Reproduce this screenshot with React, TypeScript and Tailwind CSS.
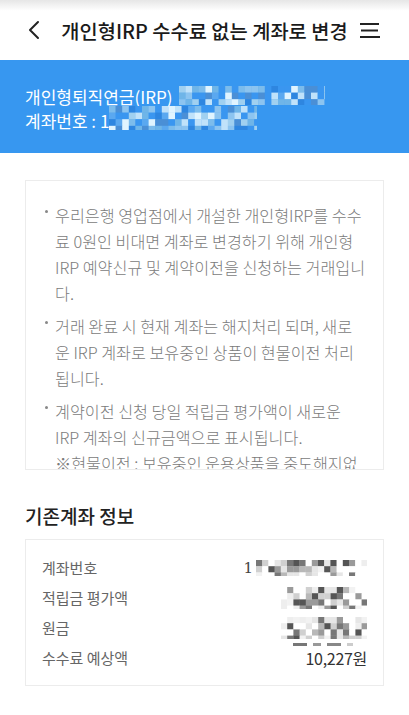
import React from "react";

function rng(seed: number) {
  let s = seed;
  return () => {
    s = (s * 1103515245 + 12345) % 2147483648;
    return s / 2147483648;
  };
}

function Mosaic({
  w,
  h,
  cell,
  palette,
  seed,
  className,
}: {
  w: number;
  h: number;
  cell: number;
  palette: string[];
  seed: number;
  className?: string;
}) {
  const r = rng(seed);
  const cols = Math.ceil(w / cell);
  const rows = Math.ceil(h / cell);
  const rects: React.ReactNode[] = [];
  for (let y = 0; y < rows; y++) {
    for (let x = 0; x < cols; x++) {
      const c = palette[Math.floor(r() * palette.length)];
      rects.push(
        <rect key={`${x}-${y}`} x={x * cell} y={y * cell} width={cell + 0.3} height={cell + 0.3} fill={c} />
      );
    }
  }
  return (
    <svg width={w} height={h} viewBox={`0 0 ${w} ${h}`} className={className}>
      {rects}
    </svg>
  );
}

const bluePal = ["#3a96f0", "#5aa8f0", "#8cc4f0", "#c0e2fa", "#2e86e0", "#6fb5e8", "#a0d0f0", "#e0f4ff", "#4a8fd6", "#3a96f0", "#7cbcec"];
const grayPal = ["#ffffff", "#ffffff", "#f2f2f2", "#e6e6e6", "#d0d0d0", "#b8b8b8", "#9a9a9a", "#777777", "#555555", "#ffffff", "#eeeeee"];

const bullets: string[][] = [
  [
    "우리은행 영업점에서 개설한 개인형IRP를 수수",
    "료 0원인 비대면 계좌로 변경하기 위해 개인형",
    "IRP 예약신규 및 계약이전을 신청하는 거래입니",
    "다.",
  ],
  [
    "거래 완료 시 현재 계좌는 해지처리 되며, 새로",
    "운 IRP 계좌로 보유중인 상품이 현물이전 처리",
    "됩니다.",
  ],
  [
    "계약이전 신청 당일 적립금 평가액이 새로운",
    "IRP 계좌의 신규금액으로 표시됩니다.",
    "※현물이전 : 보유중인 운용상품을 중도해지없",
  ],
];

export default function App() {
  return (
    <div
      className="w-[409px] h-[715px] bg-white overflow-hidden"
      style={{ fontFamily: '"Noto Sans CJK KR", "Noto Sans", sans-serif' }}
    >
      {/* Header */}
      <div className="h-[60px] bg-gradient-to-b from-[#e6e6e6] via-white via-[18%] to-white flex items-center px-[27px] relative">
        <svg width="16" height="20" viewBox="0 0 16 20" className="shrink-0">
          <path d="M11 2 L3 10 L11 18" fill="none" stroke="#222" strokeWidth="2" strokeLinecap="round" strokeLinejoin="round" />
        </svg>
        <div className="flex-1 pl-[8px] text-center text-[19.8px] font-medium text-[#1a1a1a] leading-none pt-[1px] whitespace-nowrap">
          개인형IRP 수수료 없는 계좌로 변경
        </div>
        <svg width="24" height="20" viewBox="0 0 24 20" className="shrink-0">
          <path d="M2 4 H21" stroke="#222" strokeWidth="2" />
          <path d="M3 10.5 H20" stroke="#222" strokeWidth="2" />
          <path d="M2 17 H22" stroke="#222" strokeWidth="2" />
        </svg>
      </div>

      {/* Blue banner */}
      <div className="h-[93px] bg-[#3797f0] pt-[25px] px-[25px] text-white text-[17px] leading-[24px]">
        <div className="flex items-center whitespace-nowrap">
          <span>개인형퇴직연금(IRP)</span>
          <Mosaic w={146} h={19} cell={6.6} palette={bluePal} seed={7} className="ml-[6px] -mt-[4px]" />
        </div>
        <div className="flex items-center whitespace-nowrap">
          <span>계좌번호 : 1</span>
          <Mosaic w={148} h={24} cell={6.6} palette={bluePal} seed={31} className="-mt-[6px]" />
        </div>
      </div>

      {/* Notice box */}
      <div className="mx-[25px] mt-[27px] h-[290px] overflow-hidden border border-[#ececec] pt-[21px] pl-[19px] pr-[8px]">
        {bullets.map((lines, i) => (
          <div key={i} className={`flex ${i > 0 ? "mt-[7px]" : ""}`}>
            <div className="w-[10px] shrink-0 relative">
              <span className="absolute left-0 top-[8px] w-[3px] h-[3px] rounded-full bg-[#888]" />
            </div>
            <div className="text-[16.2px] leading-[26px] text-[#7b7b7b] font-light">
              {lines.map((l, j) => (
                <div key={j} className="whitespace-nowrap">
                  {l}
                </div>
              ))}
            </div>
          </div>
        ))}
      </div>

      {/* Section title */}
      <div className="mt-[33px] px-[25px] text-[19px] leading-[26px] font-medium text-[#222]">기존계좌 정보</div>

      {/* Info box */}
      <div className="mx-[25px] mt-[10px] border border-[#ececec] pt-[13px] pb-[12px] px-[16px] text-[15px] text-[#666]">
        <div className="h-[30px] flex items-center justify-between">
          <span>계좌번호</span>
          <span className="flex items-center text-[#444]">
            <span className="mr-[3px] text-[15px]" style={{ fontFamily: '"DejaVu Serif", serif' }}>1</span>
            <Mosaic w={111} h={16} cell={6.2} palette={grayPal} seed={11} />
          </span>
        </div>
        <div className="h-[30px] flex items-center justify-between">
          <span>적립금 평가액</span>
          <Mosaic w={86} h={22} cell={6.2} palette={grayPal} seed={23} />
        </div>
        <div className="h-[30px] flex items-center justify-between">
          <span>원금</span>
          <Mosaic w={86} h={22} cell={6.2} palette={grayPal} seed={41} />
        </div>
        <div className="h-[30px] flex items-center justify-between relative">
          <span>수수료 예상액</span>
          <span className="text-[16px] text-[#333] tracking-[-0.3px]">10,227원</span>
          <div className="absolute right-[14px] top-[0px] flex gap-[6px]">
            <span className="w-[14px] h-[3px] bg-[#777]" />
            <span className="w-[8px] h-[3px] bg-[#999]" />
            <span className="w-[14px] h-[3px] bg-[#888]" />
            <span className="w-[6px] h-[3px] bg-[#ccc]" />
          </div>
        </div>
      </div>
    </div>
  );
}
